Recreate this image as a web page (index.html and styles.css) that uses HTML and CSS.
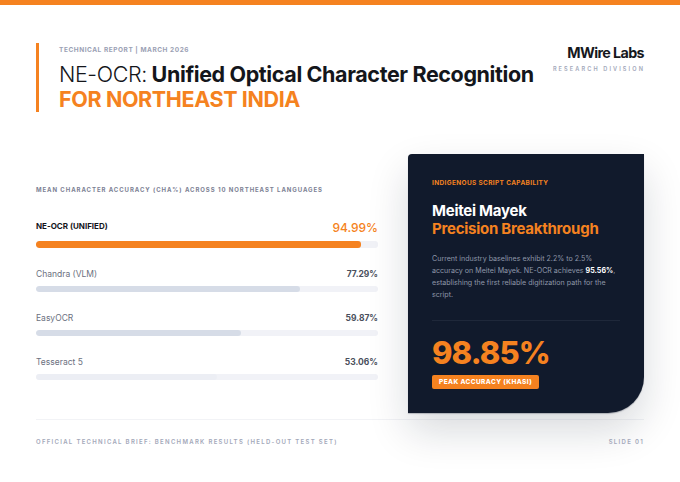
FILE: index.html
```html
<!DOCTYPE html>
<html lang="en">
<head>
<meta charset="utf-8">
<title>NE-OCR Technical Brief</title>
<link rel="stylesheet" href="styles.css">
</head>
<body>
<div class="topbar"></div>
<div class="page">
  <header class="header">
    <div class="title-block">
      <div class="kicker">TECHNICAL REPORT | MARCH 2026</div>
      <h1 class="title"><span class="light">NE-OCR:</span> Unified Optical Character Recognition<br><span class="accent">FOR NORTHEAST INDIA</span></h1>
    </div>
    <div class="logo">
      <div class="logo-name">MWire Labs</div>
      <div class="logo-sub">RESEARCH DIVISION</div>
    </div>
  </header>

  <main class="main">
    <section class="chart">
      <div class="chart-label">MEAN CHARACTER ACCURACY (CHA%) ACROSS 10 NORTHEAST LANGUAGES</div>
      <div class="row row-primary">
        <div class="row-head">
          <span class="row-name">NE-OCR (UNIFIED)</span>
          <span class="row-value">94.99%</span>
        </div>
        <div class="track"><div class="fill fill-orange" style="width:94.99%"></div></div>
      </div>
      <div class="row">
        <div class="row-head">
          <span class="row-name">Chandra (VLM)</span>
          <span class="row-value">77.29%</span>
        </div>
        <div class="track"><div class="fill" style="width:77.29%"></div></div>
      </div>
      <div class="row">
        <div class="row-head">
          <span class="row-name">EasyOCR</span>
          <span class="row-value">59.87%</span>
        </div>
        <div class="track"><div class="fill" style="width:59.87%"></div></div>
      </div>
      <div class="row">
        <div class="row-head">
          <span class="row-name">Tesseract 5</span>
          <span class="row-value">53.06%</span>
        </div>
        <div class="track"><div class="fill fill-faint" style="width:53.06%"></div></div>
      </div>
    </section>

    <aside class="card">
      <div class="card-kicker">INDIGENOUS SCRIPT CAPABILITY</div>
      <h2 class="card-title">Meitei Mayek<br><span class="accent">Precision Breakthrough</span></h2>
      <p class="card-text">Current industry baselines exhibit 2.2% to 2.5%<br>accuracy on Meitei Mayek. NE-OCR achieves <strong>95.56%</strong>,<br>establishing the first reliable digitization path for the<br>script.</p>
      <div class="divider"></div>
      <div class="big-number">98.85%</div>
      <div class="badge">PEAK ACCURACY (KHASI)</div>
    </aside>
  </main>

  <footer class="footer">
    <span>OFFICIAL TECHNICAL BRIEF: BENCHMARK RESULTS (HELD-OUT TEST SET)</span>
    <span>SLIDE 01</span>
  </footer>
</div>
</body>
</html>
```

FILE: styles.css
```css
* { box-sizing: border-box; margin: 0; padding: 0; }

html, body {
  width: 680px;
  height: 482px;
  background: #ffffff;
  font-family: Inter, "Noto Sans", "Liberation Sans", sans-serif;
  color: #111418;
  overflow: hidden;
}

.topbar {
  height: 5px;
  background: #f58220;
}

.page {
  padding: 0 36px;
}

.header {
  margin-top: 38px;
  display: flex;
  justify-content: space-between;
  align-items: flex-start;
}

.title-block {
  border-left: 3px solid #f58220;
  padding: 3px 0 0 20px;
}

.kicker {
  font-size: 6.5px;
  line-height: 9px;
  font-weight: 700;
  letter-spacing: 0.55px;
  color: #9ba1b4;
}

.title {
  margin-top: 7px;
  font-size: 21.5px;
  line-height: 25px;
  font-weight: 700;
  letter-spacing: -0.38px;
  color: #14161b;
}

.title .light {
  font-weight: 300;
}

.accent {
  color: #f58220;
}

.logo {
  text-align: right;
  padding-top: 1px;
}

.logo-name {
  font-size: 14.3px;
  line-height: 17px;
  font-weight: 700;
  letter-spacing: -0.6px;
  color: #16181d;
}

.logo-sub {
  margin-top: 4px;
  font-size: 5.6px;
  line-height: 8px;
  font-weight: 600;
  letter-spacing: 2.1px;
  margin-right: -1px;
  color: #a2a8ba;
}

.main {
  margin-top: 42px;
  display: grid;
  grid-template-columns: 342px 236px;
  column-gap: 30px;
  align-items: start;
}

.chart {
  margin-top: 32px;
}

.chart-label {
  font-size: 6px;
  line-height: 8px;
  font-weight: 700;
  letter-spacing: 0.93px;
  color: #7c8194;
  margin-bottom: 27px;
}

.row {
  margin-bottom: 21px;
}

.row:last-child {
  margin-bottom: 0;
}

.row-head {
  display: flex;
  justify-content: space-between;
  align-items: baseline;
  margin-bottom: 7px;
}

.row-name {
  font-size: 8.5px;
  line-height: 10px;
  color: #6b7080;
}

.row-value {
  font-size: 8.5px;
  line-height: 10px;
  font-weight: 700;
  color: #4a4f5c;
}

.row-primary .row-head {
  align-items: flex-start;
  margin-bottom: 6px;
}

.row-primary .row-name {
  font-size: 8px;
  font-weight: 700;
  color: #14161b;
}

.row-primary .row-value {
  font-size: 12px;
  line-height: 14px;
  font-weight: 500;
  color: #f58220;
}

.track {
  height: 6px;
  border-radius: 3px;
  background: #f1f2f7;
  overflow: hidden;
}

.row-primary .track {
  height: 7px;
}

.fill {
  height: 100%;
  border-radius: 3px;
  background: #d6dce7;
}

.fill-orange {
  background: #f58220;
}

.fill-faint {
  background: #eceef4;
}

.card {
  background: #111a2c;
  border-radius: 4px 0 36px 0;
  padding: 25px 24px 24px;
  color: #ffffff;
  box-shadow: 0 18px 40px rgba(15, 23, 42, 0.16), 0 1px 1px rgba(15, 23, 42, 0.25);
}

.card-kicker {
  font-size: 6.5px;
  line-height: 8px;
  font-weight: 700;
  letter-spacing: 0.35px;
  color: #f58220;
}

.card-title {
  margin-top: 15px;
  font-size: 15px;
  line-height: 18px;
  font-weight: 700;
  letter-spacing: -0.25px;
  color: #ffffff;
}

.card-text {
  margin-top: 15px;
  font-size: 7.1px;
  line-height: 12px;
  color: #8f97a9;
  white-space: nowrap;
}

.card-text strong {
  color: #ffffff;
  font-weight: 700;
}

.divider {
  margin-top: 19px;
  height: 1px;
  background: #1f283a;
}

.big-number {
  margin-top: 17px;
  font-size: 31px;
  line-height: 30px;
  font-weight: 800;
  letter-spacing: -0.9px;
  color: #f58220;
}

.badge {
  display: inline-block;
  margin-top: 1px;
  padding: 0 7px;
  height: 14px;
  line-height: 14px;
  font-size: 6.5px;
  font-weight: 800;
  letter-spacing: 0.4px;
  color: #ffffff;
  background: #f58220;
  border-radius: 2px;
}

.footer {
  margin-top: 6px;
  border-top: 1px solid #f2f3f6;
  padding-top: 18px;
  display: flex;
  justify-content: space-between;
  font-size: 6px;
  line-height: 8px;
  font-weight: 600;
  letter-spacing: 1.3px;
  color: #a3a8b9;
}
```
